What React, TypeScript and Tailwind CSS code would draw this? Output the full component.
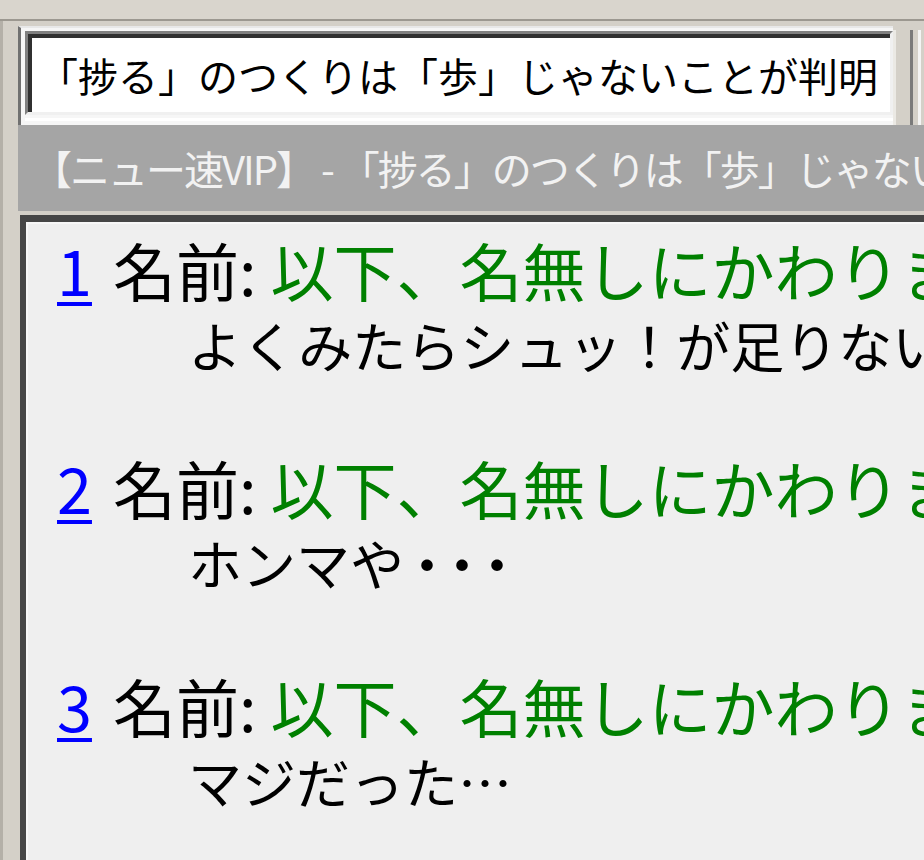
import React from "react";

const FONT = {
  fontFamily: '"Noto Sans CJK JP", "MS UI Gothic", "Liberation Sans", sans-serif',
};

type Post = { no: number; name: string; body: string; tail?: string };

const posts: Post[] = [
  { no: 1, name: "以下、名無しにかわりましてVIPがお送りします", body: "よくみたらシュッ！が足りない" },
  { no: 2, name: "以下、名無しにかわりましてVIPがお送りします", body: "ホンマや", tail: "・・・" },
  { no: 3, name: "以下、名無しにかわりましてVIPがお送りします", body: "マジだった…" },
];

function PostItem({ post }: { post: Post }) {
  return (
    <div className="flex flex-col whitespace-nowrap">
      <div className="flex items-center h-[70px] text-[63px] leading-[70px]">
        <span className="shrink-0 text-[#0000ff] underline decoration-[4px] underline-offset-[6px] w-[56px]">
          {post.no}
        </span>
        <span className="shrink-0 text-black">名前:</span>
        <span className="shrink-0 text-[#008000] ml-[14px]">{post.name}</span>
      </div>
      <div className="mt-[6px] h-[70px] text-[54px] leading-[70px] text-black pl-[131px]">
        {post.body}
        {post.tail && <span className="tracking-[-19px] ml-[-4px]">{post.tail}</span>}
      </div>
    </div>
  );
}

export default function App() {
  return (
    <div
      className="w-[924px] h-[860px] overflow-hidden bg-[#d4d0c8] flex flex-col"
      style={FONT}
    >
      {/* top toolbar strip */}
      <div className="h-[21px] shrink-0 bg-[#d9d5cd] border-b-[2px] border-[#9c9890]" />

      <div className="flex flex-1 min-h-0">
        {/* left rail */}
        <div className="w-[18px] shrink-0 border-l-[3px] border-[#b4b0a8] bg-[#d4d0c8]" />

        <div className="flex-1 min-w-0 flex flex-col">
          {/* address row */}
          <div className="flex h-[104px] shrink-0 pt-[5px]">
            <div className="flex-1 min-w-0 flex flex-col border-l-[3px] border-t-[2px] border-l-[#707070] border-t-[#e8e8e8] bg-[#f6f6f6] pl-[4px] pt-[3px]">
              <div className="w-[868px] h-[84px] border-t-[3px] border-l-[3px] border-[#808080] border-r-[3px] border-b-[3px] border-r-[#f0f0f0] border-b-[#f0f0f0]">
                <div className="h-full border-t-[4px] border-l-[4px] border-[#303030] bg-white flex items-center pl-[6px] whitespace-nowrap overflow-hidden">
                  <span className="text-[40px] leading-none text-black">
                    「捗る」のつくりは「歩」じゃないことが判明
                  </span>
                </div>
              </div>
              <div className="mt-[3px] h-[3px] w-full bg-white" />
            </div>
            <div className="w-[31px] shrink-0 flex bg-[#d4d0c8] pt-[4px]">
              <div className="w-[17px] border-l-[3px] border-[#ebe9e4]" />
              <div className="w-[3px] bg-[#7a7a7a]" />
              <div className="w-[5px]" />
              <div className="w-[3px] bg-[#f4f4f4]" />
            </div>
          </div>

          {/* thread title bar */}
          <div className="h-[86px] shrink-0 bg-[#a5a5a5] flex items-center pl-[14px] whitespace-nowrap overflow-hidden">
            <span className="text-[40px] leading-none tracking-[-2px] text-[#f2f2f2]">
              【ニュー速VIP】 - 「捗る」のつくりは「歩」じゃないことが判明
            </span>
          </div>

          <div className="h-[4px] shrink-0 bg-[#d4d0c8]" />

          {/* thread view */}
          <div className="flex-1 min-h-0 ml-[2px] border-t-[7px] border-l-[6px] border-[#464646] bg-[#efefef] overflow-hidden">
            <div className="h-full border-t-[2px] border-l-[2px] border-[#f7f7f7] pl-[29px] pt-[10px] flex flex-col gap-[72px]">
              {posts.map((p) => (
                <PostItem key={p.no} post={p} />
              ))}
            </div>
          </div>
        </div>
      </div>
    </div>
  );
}
